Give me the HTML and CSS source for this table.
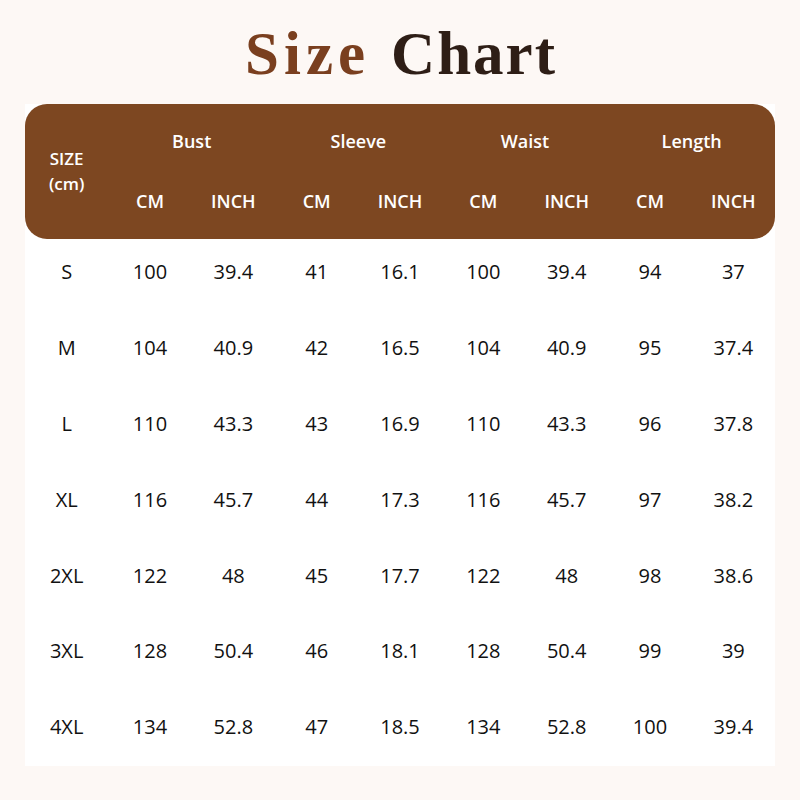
FILE: index.html
```html
<!DOCTYPE html>
<html>
<head>
<meta charset="utf-8">
<link rel="stylesheet" href="styles.css">
</head>
<body>
<div class="page">
  <h1 class="title"><span class="t-size">Size</span><span class="t-chart">Chart</span></h1>
  <div class="chart">
    <div class="head">
      <div class="h-size">SIZE<br>(cm)</div>
      <div class="h-group">Bust</div>
      <div class="h-group">Sleeve</div>
      <div class="h-group">Waist</div>
      <div class="h-group">Length</div>
      <div class="h-unit">CM</div><div class="h-unit">INCH</div>
      <div class="h-unit">CM</div><div class="h-unit">INCH</div>
      <div class="h-unit">CM</div><div class="h-unit">INCH</div>
      <div class="h-unit">CM</div><div class="h-unit">INCH</div>
    </div>
    <div class="body">
      <div class="row"><span>S</span><span>100</span><span>39.4</span><span>41</span><span>16.1</span><span>100</span><span>39.4</span><span>94</span><span>37</span></div>
      <div class="row"><span>M</span><span>104</span><span>40.9</span><span>42</span><span>16.5</span><span>104</span><span>40.9</span><span>95</span><span>37.4</span></div>
      <div class="row"><span>L</span><span>110</span><span>43.3</span><span>43</span><span>16.9</span><span>110</span><span>43.3</span><span>96</span><span>37.8</span></div>
      <div class="row"><span>XL</span><span>116</span><span>45.7</span><span>44</span><span>17.3</span><span>116</span><span>45.7</span><span>97</span><span>38.2</span></div>
      <div class="row"><span>2XL</span><span>122</span><span>48</span><span>45</span><span>17.7</span><span>122</span><span>48</span><span>98</span><span>38.6</span></div>
      <div class="row"><span>3XL</span><span>128</span><span>50.4</span><span>46</span><span>18.1</span><span>128</span><span>50.4</span><span>99</span><span>39</span></div>
      <div class="row"><span>4XL</span><span>134</span><span>52.8</span><span>47</span><span>18.5</span><span>134</span><span>52.8</span><span>100</span><span>39.4</span></div>
    </div>
  </div>
</div>
</body>
</html>
```

FILE: styles.css
```css
html, body {
  margin: 0;
  padding: 0;
  background: #fdf8f5;
}
.page {
  width: 800px;
  height: 800px;
  padding: 0 25px;
  box-sizing: border-box;
  font-family: "Open Sans", "Noto Sans", sans-serif;
}
.title {
  margin: 0;
  height: 104px;
  display: flex;
  align-items: center;
  justify-content: center;
  gap: 21px;
  font-family: "Liberation Serif", serif;
  font-weight: 700;
  font-size: 61px;
  line-height: 1;
  padding: 2px 0 0 2px;
  box-sizing: border-box;
}
.t-size { color: #7a3f1f; letter-spacing: 5px; }
.t-chart { color: #2e1e16; letter-spacing: 2px; }
.chart {
  width: 750px;
  background: #ffffff;
}
.head {
  background: #7d4721;
  border-radius: 22px;
  height: 135px;
  box-sizing: border-box;
  padding: 7px 0 8px;
  display: grid;
  grid-template-columns: repeat(9, 1fr);
  grid-template-rows: 60px 60px;
  color: #ffffff;
  font-weight: 600;
  font-size: 18px;
}
.head > div {
  display: flex;
  align-items: center;
  justify-content: center;
  text-align: center;
}
.h-size {
  grid-row: 1 / span 2;
  line-height: 25px;
  font-size: 17px;
}
.h-group {
  grid-column: span 2;
}
.body {
  height: 527px;
  display: grid;
  grid-template-rows: repeat(7, 75.8px);
  align-content: start;
}
.row {
  display: grid;
  grid-template-columns: repeat(9, 1fr);
  align-items: center;
  color: #111111;
  font-size: 20px;
}
.row span {
  text-align: center;
  padding-bottom: 10px;
}
```
